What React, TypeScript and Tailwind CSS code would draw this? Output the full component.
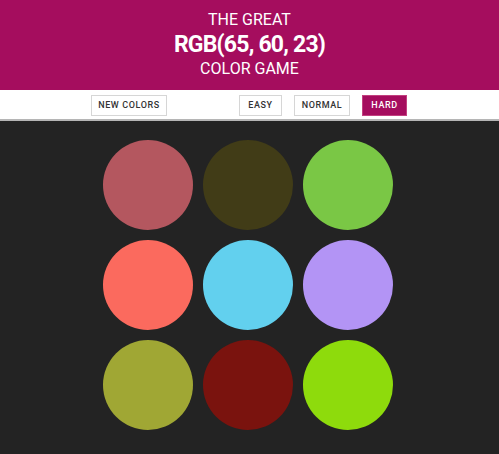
export default function App() {
  const colors = [
    "bg-[#b4575f]",
    "bg-[#413c17]",
    "bg-[#7ac745]",
    "bg-[#fb6a5e]",
    "bg-[#62d0ee]",
    "bg-[#b394f5]",
    "bg-[#a0a734]",
    "bg-[#7a130e]",
    "bg-[#8edb0c]",
  ];

  return (
    <div className="min-h-[454px] bg-[#232323] font-['Roboto',sans-serif]">
      {/* title */}
      <div className="h-[90px] bg-[#a50d5e] text-white flex flex-col items-center pt-[8px]">
        <div className="text-[16px] leading-[24px]">THE GREAT</div>
        <div className="text-[23px] leading-[26px] font-bold tracking-[-0.8px]">RGB(65, 60, 23)</div>
        <div className="text-[16px] leading-[22px]">COLOR GAME</div>
      </div>

      {/* controls */}
      <div className="h-[31px] bg-white border-b-2 border-[#b5b5b5] flex items-center pl-[91px] pt-[2px]">
        <button className="h-[21px] w-[76px] border border-[#d6d6d6] text-[9px] font-medium tracking-[0.6px] text-[#333]">
          NEW COLORS
        </button>
        <button className="ml-[72px] h-[21px] w-[43px] border border-[#d6d6d6] text-[9px] font-medium tracking-[0.6px] text-[#333]">
          EASY
        </button>
        <button className="ml-[12px] h-[21px] w-[56px] border border-[#d6d6d6] text-[9px] font-medium tracking-[0.6px] text-[#333]">
          NORMAL
        </button>
        <button className="ml-[12px] h-[21px] w-[45px] border border-[#c2407f] bg-[#a50d5e] text-[9px] font-medium tracking-[0.6px] text-white">
          HARD
        </button>
      </div>

      {/* squares */}
      <div className="grid grid-cols-[90px_90px_90px] gap-[10px] pt-[19px] pl-[103px]">
        {colors.map((c, i) => (
          <div key={i} className={`h-[90px] w-[90px] rounded-full ${c}`} />
        ))}
      </div>
    </div>
  );
}
